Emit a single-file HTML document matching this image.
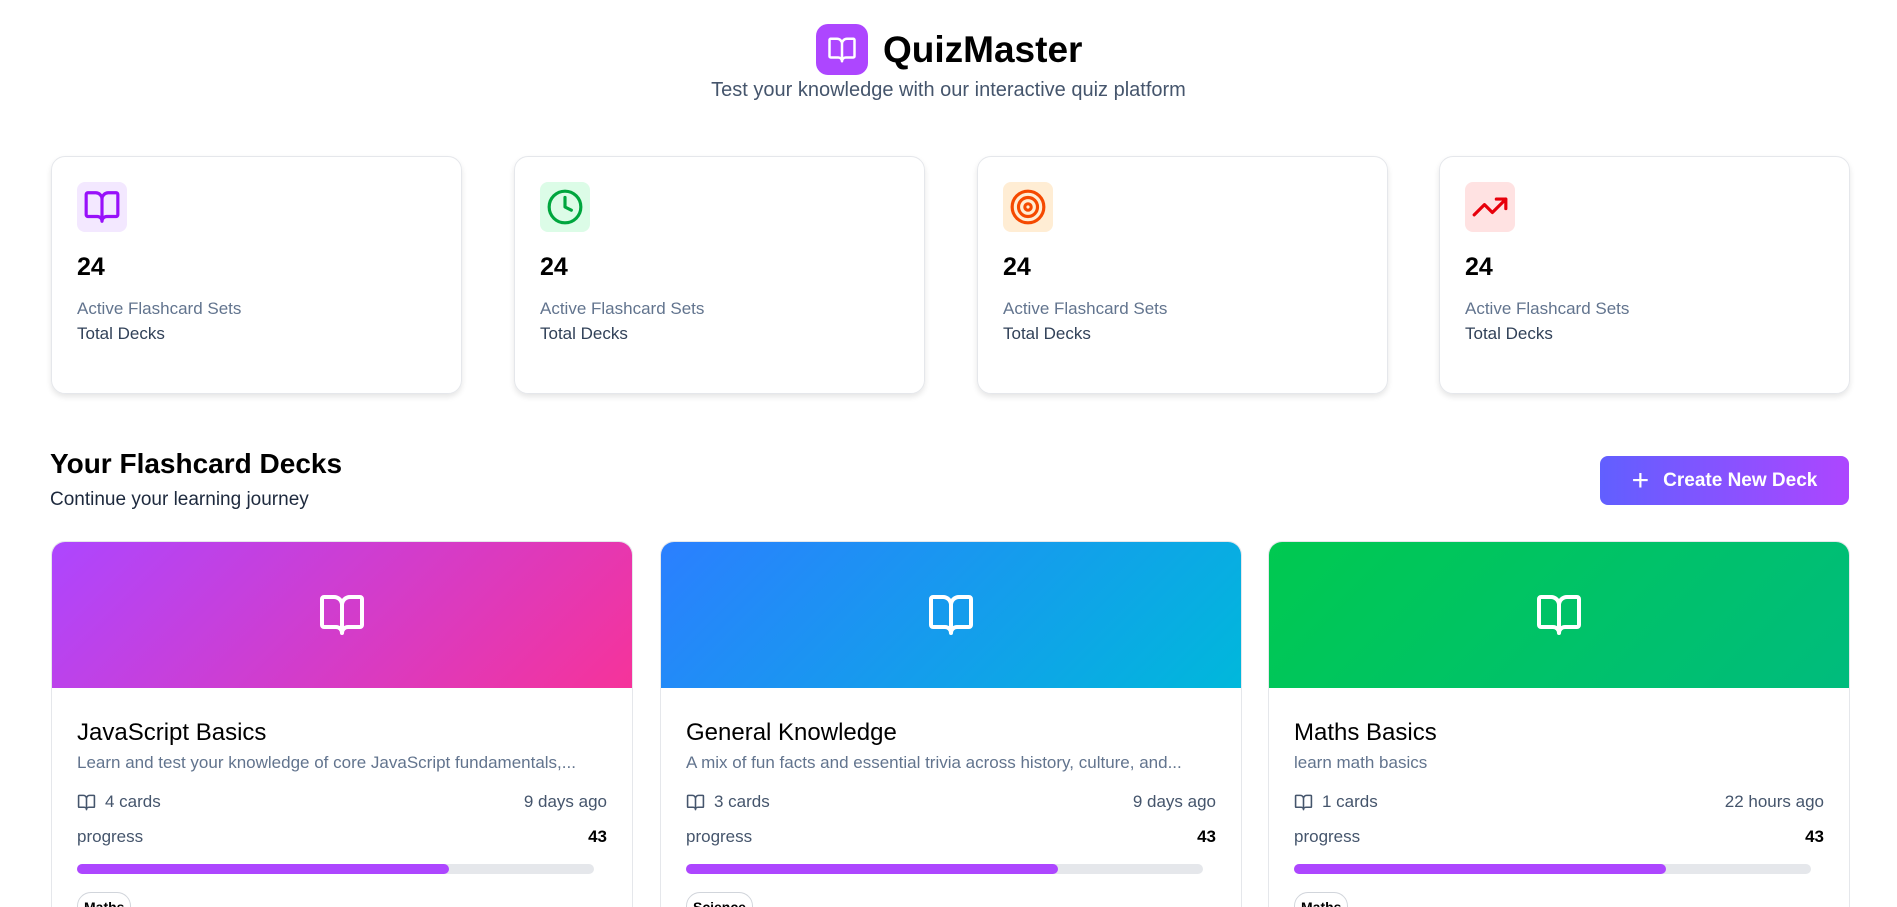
<!DOCTYPE html>
<html><head><meta charset="utf-8"><style>
*{box-sizing:border-box;margin:0;padding:0}
html,body{width:1897px;height:907px;overflow:hidden}
body{background:#fff;font-family:"Liberation Sans",sans-serif;color:#000;position:relative}
.abs{position:absolute}
.logo{left:816px;top:24px;width:52px;height:51px;border-radius:12px;background:#ad46ff;display:flex;align-items:center;justify-content:center}
.title{left:883px;top:26px;font-size:37px;font-weight:bold;line-height:48px}
.sub{left:0;width:1897px;text-align:center;top:79px;font-size:20px;color:#45556c}
.stat{top:156px;width:411px;height:238px;border:1px solid #e5e7eb;border-radius:14px;box-shadow:0 3px 6px rgba(0,0,0,.1)}
.ib{position:absolute;left:25px;top:25px;width:50px;height:50px;border-radius:8px;display:flex;align-items:center;justify-content:center}
.num{position:absolute;left:25px;top:96px;font-size:25px;font-weight:bold}
.l1{position:absolute;left:25px;top:142px;font-size:17px;color:#62748e}
.l2{position:absolute;left:25px;top:167px;font-size:17px;color:#314158}
.h2{left:50px;top:448px;font-size:28px;font-weight:bold}
.h2s{left:50px;top:489px;font-size:19px;color:#1d293d}
.btn{left:1600px;top:456px;width:249px;height:49px;border-radius:8px;background:linear-gradient(90deg,#615fff,#ad46ff);color:#fff;font-size:19px;font-weight:bold;display:flex;align-items:center;justify-content:center;gap:14px}
.deck{top:541px;width:582px;height:380px;border:1px solid #e5e7eb;border-radius:14px;overflow:hidden}
.hd{height:146px;display:flex;align-items:center;justify-content:center}
.dt{position:absolute;left:25px;top:177px;font-size:24px}
.dd{position:absolute;left:25px;top:211px;font-size:17px;color:#62748e}
.meta{position:absolute;left:25px;right:25px;top:250px;font-size:17px;color:#45556c;display:flex;justify-content:space-between;align-items:center}
.meta span{display:flex;align-items:center;gap:9px}
.prog{position:absolute;left:25px;right:25px;top:285px;font-size:17px;color:#45556c;display:flex;justify-content:space-between}
.prog b{color:#000}
.bar{position:absolute;left:25px;width:517px;top:322px;height:10px;border-radius:5px;background:#e5e7eb}
.bar div{width:372px;height:10px;border-radius:5px;background:#ad46ff}
.tag{position:absolute;left:25px;top:350px;border:1px solid #d1d5db;border-radius:14px;padding:6px 6px;font-size:14px;font-weight:bold}
</style></head><body>
<div class="abs logo"><svg width="30" height="30" viewBox="0 0 24 24" fill="none" stroke="#fff" stroke-width="2" stroke-linecap="round" stroke-linejoin="round"><path d="M12 7v14M3 18a1 1 0 0 1-1-1V4a1 1 0 0 1 1-1h5a4 4 0 0 1 4 4 4 4 0 0 1 4-4h5a1 1 0 0 1 1 1v13a1 1 0 0 1-1 1h-6a3 3 0 0 0-3 3 3 3 0 0 0-3-3z"/></svg></div>
<div class="abs title">QuizMaster</div>
<div class="abs sub">Test your knowledge with our interactive quiz platform</div>

<div class="abs stat" style="left:51px"><div class="ib" style="background:#f3e8ff"><svg width="38" height="38" viewBox="0 0 24 24" fill="none" stroke="#9810fa" stroke-width="2" stroke-linecap="round" stroke-linejoin="round"><path d="M12 7v14M3 18a1 1 0 0 1-1-1V4a1 1 0 0 1 1-1h5a4 4 0 0 1 4 4 4 4 0 0 1 4-4h5a1 1 0 0 1 1 1v13a1 1 0 0 1-1 1h-6a3 3 0 0 0-3 3 3 3 0 0 0-3-3z"/></svg></div><div class="num">24</div><div class="l1">Active Flashcard Sets</div><div class="l2">Total Decks</div></div>
<div class="abs stat" style="left:514px"><div class="ib" style="background:#dcfce7"><svg width="38" height="38" viewBox="0 0 24 24" fill="none" stroke="#00a63e" stroke-width="2" stroke-linecap="round" stroke-linejoin="round"><circle cx="12" cy="12" r="10"/><path d="M12 6v6l4 2"/></svg></div><div class="num">24</div><div class="l1">Active Flashcard Sets</div><div class="l2">Total Decks</div></div>
<div class="abs stat" style="left:977px"><div class="ib" style="background:#ffedd4"><svg width="38" height="38" viewBox="0 0 24 24" fill="none" stroke="#f54900" stroke-width="2"><circle cx="12" cy="12" r="10"/><circle cx="12" cy="12" r="6"/><circle cx="12" cy="12" r="2"/></svg></div><div class="num">24</div><div class="l1">Active Flashcard Sets</div><div class="l2">Total Decks</div></div>
<div class="abs stat" style="left:1439px"><div class="ib" style="background:#ffe2e2"><svg width="38" height="38" viewBox="0 0 24 24" fill="none" stroke="#e7000b" stroke-width="2" stroke-linecap="round" stroke-linejoin="round"><path d="M22 7l-8.5 8.5-5-5L2 17M16 7h6v6"/></svg></div><div class="num">24</div><div class="l1">Active Flashcard Sets</div><div class="l2">Total Decks</div></div>

<div class="abs h2">Your Flashcard Decks</div>
<div class="abs h2s">Continue your learning journey</div>
<div class="abs btn"><span style="font-size:30px;font-weight:normal;line-height:20px">+</span>Create New Deck</div>

<div class="abs deck" style="left:51px"><div class="hd" style="background:linear-gradient(135deg,#ad46ff,#f6339a)"><svg width="48" height="48" viewBox="0 0 24 24" fill="none" stroke="#fff" stroke-width="2" stroke-linecap="round" stroke-linejoin="round"><path d="M12 7v14M3 18a1 1 0 0 1-1-1V4a1 1 0 0 1 1-1h5a4 4 0 0 1 4 4 4 4 0 0 1 4-4h5a1 1 0 0 1 1 1v13a1 1 0 0 1-1 1h-6a3 3 0 0 0-3 3 3 3 0 0 0-3-3z"/></svg></div>
<div class="dt">JavaScript Basics</div><div class="dd">Learn and test your knowledge of core JavaScript fundamentals,...</div>
<div class="meta"><span><svg width="19" height="19" viewBox="0 0 24 24" fill="none" stroke="#45556c" stroke-width="2" stroke-linecap="round" stroke-linejoin="round"><path d="M12 7v14M3 18a1 1 0 0 1-1-1V4a1 1 0 0 1 1-1h5a4 4 0 0 1 4 4 4 4 0 0 1 4-4h5a1 1 0 0 1 1 1v13a1 1 0 0 1-1 1h-6a3 3 0 0 0-3 3 3 3 0 0 0-3-3z"/></svg>4 cards</span><span>9 days ago</span></div><div class="prog"><span>progress</span><b>43</b></div><div class="bar"><div></div></div><div class="tag">Maths</div></div>

<div class="abs deck" style="left:660px"><div class="hd" style="background:linear-gradient(135deg,#2b7fff,#00b8db)"><svg width="48" height="48" viewBox="0 0 24 24" fill="none" stroke="#fff" stroke-width="2" stroke-linecap="round" stroke-linejoin="round"><path d="M12 7v14M3 18a1 1 0 0 1-1-1V4a1 1 0 0 1 1-1h5a4 4 0 0 1 4 4 4 4 0 0 1 4-4h5a1 1 0 0 1 1 1v13a1 1 0 0 1-1 1h-6a3 3 0 0 0-3 3 3 3 0 0 0-3-3z"/></svg></div>
<div class="dt">General Knowledge</div><div class="dd">A mix of fun facts and essential trivia across history, culture, and...</div>
<div class="meta"><span><svg width="19" height="19" viewBox="0 0 24 24" fill="none" stroke="#45556c" stroke-width="2" stroke-linecap="round" stroke-linejoin="round"><path d="M12 7v14M3 18a1 1 0 0 1-1-1V4a1 1 0 0 1 1-1h5a4 4 0 0 1 4 4 4 4 0 0 1 4-4h5a1 1 0 0 1 1 1v13a1 1 0 0 1-1 1h-6a3 3 0 0 0-3 3 3 3 0 0 0-3-3z"/></svg>3 cards</span><span>9 days ago</span></div><div class="prog"><span>progress</span><b>43</b></div><div class="bar"><div></div></div><div class="tag">Science</div></div>

<div class="abs deck" style="left:1268px"><div class="hd" style="background:linear-gradient(135deg,#00c950,#00bc7d)"><svg width="48" height="48" viewBox="0 0 24 24" fill="none" stroke="#fff" stroke-width="2" stroke-linecap="round" stroke-linejoin="round"><path d="M12 7v14M3 18a1 1 0 0 1-1-1V4a1 1 0 0 1 1-1h5a4 4 0 0 1 4 4 4 4 0 0 1 4-4h5a1 1 0 0 1 1 1v13a1 1 0 0 1-1 1h-6a3 3 0 0 0-3 3 3 3 0 0 0-3-3z"/></svg></div>
<div class="dt">Maths Basics</div><div class="dd">learn math basics</div>
<div class="meta"><span><svg width="19" height="19" viewBox="0 0 24 24" fill="none" stroke="#45556c" stroke-width="2" stroke-linecap="round" stroke-linejoin="round"><path d="M12 7v14M3 18a1 1 0 0 1-1-1V4a1 1 0 0 1 1-1h5a4 4 0 0 1 4 4 4 4 0 0 1 4-4h5a1 1 0 0 1 1 1v13a1 1 0 0 1-1 1h-6a3 3 0 0 0-3 3 3 3 0 0 0-3-3z"/></svg>1 cards</span><span>22 hours ago</span></div><div class="prog"><span>progress</span><b>43</b></div><div class="bar"><div></div></div><div class="tag">Maths</div></div>
</body></html>
